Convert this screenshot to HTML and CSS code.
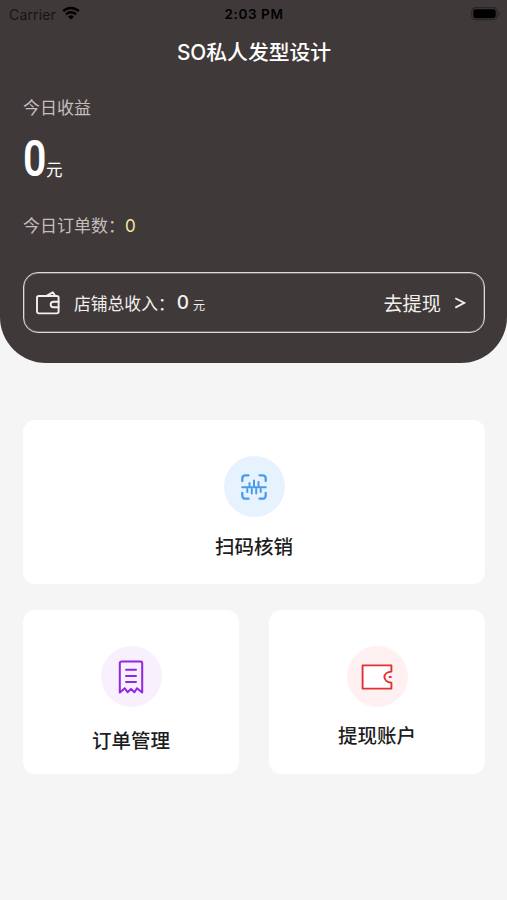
FILE: index.html
```html
<!DOCTYPE html>
<html lang="zh-CN">
<head>
    <meta charset="UTF-8">
    <meta name="viewport" content="width=device-width, initial-scale=1.0">
    <title>SO私人发型设计</title>
    <link rel="stylesheet" href="styles.css">
</head>
<body>
    <div class="header">
        <div class="status-bar">
            <div class="carrier">
                <span>Carrier</span>
                <svg class="wifi" viewBox="0 0 18 14" width="18" height="14">
                    <path d="M1.2 5.2a11.2 11.2 0 0 1 15.6 0M4 8.3a7.1 7.1 0 0 1 10 0" fill="none" stroke="#000" stroke-width="2.5"/>
                    <path d="M9 13.6 6 10.6a4.3 4.3 0 0 1 6 0z"/>
                </svg>
            </div>
            <div class="time">2:03 PM</div>
            <svg class="battery" viewBox="0 0 30 14" width="30" height="14">
                <rect x=".7" y=".7" width="25.6" height="12" rx="4" fill="none" stroke="#292625" stroke-width="1.2"/>
                <rect x="2.3" y="2.2" width="22.4" height="9" rx="2.4"/>
                <path d="M27.6 4.5c1.8.8 1.8 3.6 0 4.4z" fill="#292625"/>
            </svg>
        </div>
        <h1>SO私人发型设计</h1>

        <div class="label">今日收益</div>
        <div class="income">
            <span class="income-num">0</span><span class="income-unit">元</span>
        </div>
        <div class="orders">今日订单数：<span>0</span></div>

        <div class="total">
            <svg class="total-icon" viewBox="0 0 24 24" width="24" height="24" fill="none" stroke="#f2f0ee" stroke-width="1.9" stroke-linejoin="round" stroke-linecap="round">
                <rect x="1" y="5" width="21.6" height="17.4" rx="1.8"/>
                <path d="M10.5 4.8 16.8 1.3 19.2 4.8M22.5 10.7h-5a2.8 2.8 0 0 0 0 5.6h5"/>
            </svg>
            <span class="total-label">店铺总收入：</span>
            <span class="total-num">0</span>
            <span class="total-unit">元</span>
            <a class="withdraw">
                <span>去提现</span>
                <svg viewBox="0 0 12 14" width="12" height="14" fill="none" stroke="#f2f0ee" stroke-width="1.8">
                    <path d="M1.3 2.2 10.4 6.9 1.3 11.6"/>
                </svg>
            </a>
        </div>
    </div>

    <div class="menu">
        <div class="card card-scan">
            <div class="icon blue">
                <svg viewBox="0 0 26 26" width="26" height="26" fill="none" stroke="#4a9aec" stroke-width="2.3" stroke-linecap="round">
                    <path d="M1.3 7V4.3a3 3 0 0 1 3-3h3.2M18.5 1.3h3.2a3 3 0 0 1 3 3V7M24.7 19v2.7a3 3 0 0 1-3 3h-3.2M7.5 24.7H4.3a3 3 0 0 1-3-3V19"/>
                    <path d="M1.2 13.2h23.6" stroke-width="2"/>
                    <path d="M8.5 9v3M13 6.5V12M17.5 8v4M6.3 15v3M10.8 15v4.5M15.2 15v4.5M19.7 15v3" stroke-width="2"/>
                </svg>
            </div>
            <div class="card-title">扫码核销</div>
        </div>
        <div class="card card-orders">
            <div class="icon purple">
                <svg viewBox="0 0 26 34" width="26" height="34" fill="none" stroke="#9127e2" stroke-width="2" stroke-linejoin="round" stroke-linecap="round">
                    <path d="M1.8 32.5V3.2a1.7 1.7 0 0 1 1.7-1.7h19a1.7 1.7 0 0 1 1.7 1.7v29.3l-5.2-4.3-2.6 4.1-3.4-3.4-3.4 3.4-2.8-4.1z"/>
                    <path d="M8 9.7h10M8 15.9h10M8 22.1h10"/>
                </svg>
            </div>
            <div class="card-title">订单管理</div>
        </div>
        <div class="card card-account">
            <div class="icon red">
                <svg viewBox="0 0 32 26" width="32" height="26" fill="none" stroke="#e03232" stroke-width="1.9" stroke-linejoin="round">
                    <path d="M1.6 1.4h28.8v6.2c-4 .3-7 2.5-7 5.5s3 5.3 7 5.6v5.9H1.6z" fill="#fff"/>
                    <path d="M27.8 13h2.8" stroke="#c22a8a"/>
                </svg>
            </div>
            <div class="card-title">提现账户</div>
        </div>
    </div>
</body>
</html>
```
FILE: styles.css
```css
:root {
    --dark: #3f3a39;
    --page-bg: #f5f5f5;
    --white: #ffffff;
    --text-light: #f2f0ee;
    --text-muted: #c2bfbd;
}

* {
    margin: 0;
    padding: 0;
    box-sizing: border-box;
}

body {
    font-family: Inter, 'Noto Sans CJK SC', sans-serif;
    background-color: var(--page-bg);
    min-height: 900px;
}

.header {
    height: 363px;
    padding: 0 22px 0 23px;
    background: var(--dark);
    color: var(--white);
    border-radius: 0 0 46px 46px;
}

.status-bar {
    display: grid;
    grid-template-columns: 1fr auto 1fr;
    align-items: center;
    height: 28px;
    margin: 0 -16px 0 -14px;
    color: #000;
    font-size: 14px;
}

.carrier {
    display: flex;
    align-items: center;
    gap: 6px;
    color: #171514;
    letter-spacing: 0.15px;
}

.wifi {
    margin-top: -3px;
}

.time {
    margin-right: 2px;
    font-size: 13.5px;
    font-weight: 600;
    letter-spacing: 0.6px;
}

.battery {
    justify-self: end;
}

h1 {
    height: 48px;
    line-height: 50px;
    font-size: 20.8px;
    font-weight: 500;
    text-align: center;
}

.label {
    margin-top: 20px;
    line-height: 24px;
    font-size: 17px;
    color: var(--text-muted);
}

.income {
    display: flex;
    align-items: baseline;
    height: 60px;
    margin-top: 9px;
    line-height: 60px;
}

.income-num {
    width: 23px;
    font-family: Roboto, sans-serif;
    font-size: 50px;
    font-weight: 600;
    transform: scaleX(0.82);
    transform-origin: left;
}

.income-unit {
    font-size: 16.5px;
    font-weight: 400;
}

.orders {
    margin-top: 25px;
    line-height: 24px;
    font-size: 17px;
    color: var(--text-muted);
}

.orders span {
    color: #f3e79b;
}

.total {
    display: flex;
    align-items: center;
    height: 61px;
    margin-top: 34px;
    padding: 0 18px 0 12px;
    border: 1px solid #dedcda;
    border-radius: 15px;
    box-shadow: inset 0 0 0 1px rgba(255, 255, 255, 0.25);
    color: var(--text-light);
}

.total-label {
    margin-left: 14px;
    font-size: 16.8px;
}

.total-num {
    margin-left: 2px;
    font-size: 19px;
    font-weight: 500;
}

.total-unit {
    margin: 4px 0 0 4px;
    font-size: 12px;
}

.withdraw {
    display: flex;
    align-items: center;
    gap: 13px;
    margin-left: auto;
    font-size: 19.2px;
}

.menu {
    display: grid;
    grid-template-columns: 216px 216px;
    justify-content: space-between;
    row-gap: 26px;
    padding: 57px 22px 0 23px;
}

.card {
    display: flex;
    flex-direction: column;
    align-items: center;
    height: 164px;
    padding-top: 36px;
    background: var(--white);
    border-radius: 12px;
}

.card-scan {
    grid-column: 1 / 3;
}

.icon {
    display: flex;
    align-items: center;
    justify-content: center;
    width: 61px;
    height: 61px;
    border-radius: 50%;
}

.blue {
    background: #e6f3ff;
}

.purple {
    background: #f9f0fe;
}

.red {
    background: #fff1f1;
}

.card-title {
    margin-top: 16px;
    line-height: 28px;
    font-size: 19.5px;
    font-weight: 500;
    color: #1d1d1d;
}

.card-orders .card-title {
    margin-top: 20px;
}

.card-account .card-title {
    margin-top: 15px;
}
```
